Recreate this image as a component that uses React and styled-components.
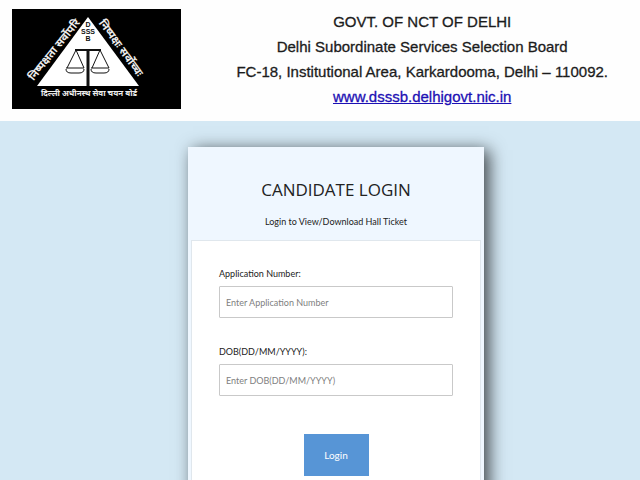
import styled, { createGlobalStyle } from "styled-components";

const GlobalStyle = createGlobalStyle`
  * {
    box-sizing: border-box;
  }
  body {
    margin: 0;
    background: #d4e8f4;
    color: #222;
    font-family: Lato, "Open Sans", sans-serif;
  }
`;

const Page = styled.div`
  display: flex;
  flex-direction: column;
  min-height: 100vh;
`;

const Header = styled.header`
  display: flex;
  align-items: flex-start;
  justify-content: space-between;
  gap: 16px;
  padding: 9px 32px 12px 12px;
  background: #fefefe;
`;

const Logo = styled.svg`
  flex: none;
  width: 169px;
  height: 100px;
  background: #000;
`;

const Address = styled.address`
  font-family: "Liberation Sans", Arial, sans-serif;
  font-size: 15px;
  font-style: normal;
  line-height: 25px;
  text-align: center;
  color: #1c1c1c;
  -webkit-text-stroke: 0.3px;
`;

const Line = styled.div`
  white-space: nowrap;
`;

const SiteLink = styled.a`
  color: #1c10b4;
`;

const Main = styled.main`
  display: flex;
  flex: 1;
  justify-content: center;
  padding: 26px 0 0 32px;
  overflow: hidden;
`;

const Card = styled.section`
  width: 296px;
  margin-bottom: -32px;
  padding: 0 3px;
  background: #eff7ff;
  box-shadow: 5px 3px 16px rgba(0, 0, 0, 0.7);
`;

const CardHeader = styled.div`
  padding: 28px 0 10px;
  text-align: center;
`;

const Title = styled.h1`
  margin: 0 0 9px;
  font-family: "Open Sans", sans-serif;
  font-size: 17px;
  font-weight: 400;
  line-height: 30px;
`;

const Subtitle = styled.p`
  margin: 0;
  font-size: 9px;
  line-height: 16px;
`;

const Form = styled.form`
  display: flex;
  flex-direction: column;
  height: 100%;
  padding: 25px 27px;
  border: 1px solid #e0e7ed;
  background: #fff;
`;

const Field = styled.div`
  display: flex;
  flex-direction: column;
  margin-bottom: 26px;
`;

const Label = styled.label`
  margin-bottom: 4px;
  font-size: 9px;
  line-height: 16px;
`;

const Input = styled.input`
  width: 100%;
  height: 32px;
  padding: 0 6px;
  border: 1px solid #c9c9c9;
  border-radius: 1px;
  background: #fff;
  color: #222;
  font-family: inherit;
  font-size: 9px;

  &::placeholder {
    color: #808080;
    opacity: 1;
  }
`;

const LoginButton = styled.button`
  align-self: center;
  margin-top: 12px;
  width: 65px;
  height: 42px;
  padding: 0;
  border: 0;
  background: #5795d6;
  color: #fff;
  font-family: inherit;
  font-size: 10px;
  cursor: pointer;
`;

const Emblem = () => (
  <Logo viewBox="0 0 169 100" role="img" aria-label="DSSSB">
    <path d="M76 8 L127 77 H25 Z" fill="#fff" />
    <g fill="none" stroke="#111" strokeWidth="1">
      <path d="M63 41 H89" strokeWidth="2" />
      <path d="M76 40 V77" strokeWidth="3" />
      <path d="M64 41 L55 59 M64 41 L72 59" />
      <path d="M88 41 L80 59 M88 41 L97 59" />
      <path d="M54 59 H72 M54 60 Q54 64 59 64 H67 Q72 64 72 60" />
      <path d="M79 59 H97 M79 60 Q79 64 84 64 H92 Q97 64 97 60" />
    </g>
    <g
      fill="#111"
      fontFamily="Liberation Sans, sans-serif"
      fontSize="7"
      fontWeight="700"
      textAnchor="middle"
    >
      <text x="76" y="18">D</text>
      <text x="76" y="25">SSS</text>
      <text x="76" y="32">B</text>
    </g>
    <g
      fill="#eee"
      fontFamily="Noto Sans Devanagari, Noto Sans, sans-serif"
      fontWeight="700"
      textAnchor="middle"
    >
      <text fontSize="11" transform="translate(45 43) rotate(-51)">
        निष्पक्षता सर्वोपरि
      </text>
      <text fontSize="11" transform="translate(106 41) rotate(54)">
        निष्पक्षः सर्वोच्चः
      </text>
      <text x="77" y="87" fontSize="8">
        दिल्ली अधीनस्थ सेवा चयन बोर्ड
      </text>
    </g>
  </Logo>
);

const App = () => {
  return (
    <Page>
      <GlobalStyle />
      <Header>
        <Emblem />
        <Address>
          <Line>GOVT. OF NCT OF DELHI</Line>
          <Line>Delhi Subordinate Services Selection Board</Line>
          <Line>FC-18, Institutional Area, Karkardooma, Delhi – 110092.</Line>
          <SiteLink href="http://www.dsssb.delhigovt.nic.in">
            www.dsssb.delhigovt.nic.in
          </SiteLink>
        </Address>
      </Header>
      <Main>
        <Card>
          <CardHeader>
            <Title>CANDIDATE LOGIN</Title>
            <Subtitle>Login to View/Download Hall Ticket</Subtitle>
          </CardHeader>
          <Form onSubmit={(e) => e.preventDefault()}>
            <Field>
              <Label htmlFor="application">Application Number:</Label>
              <Input id="application" placeholder="Enter Application Number" />
            </Field>
            <Field>
              <Label htmlFor="dob">DOB(DD/MM/YYYY):</Label>
              <Input id="dob" placeholder="Enter DOB(DD/MM/YYYY)" />
            </Field>
            <LoginButton type="submit">Login</LoginButton>
          </Form>
        </Card>
      </Main>
    </Page>
  );
};

export default App;
